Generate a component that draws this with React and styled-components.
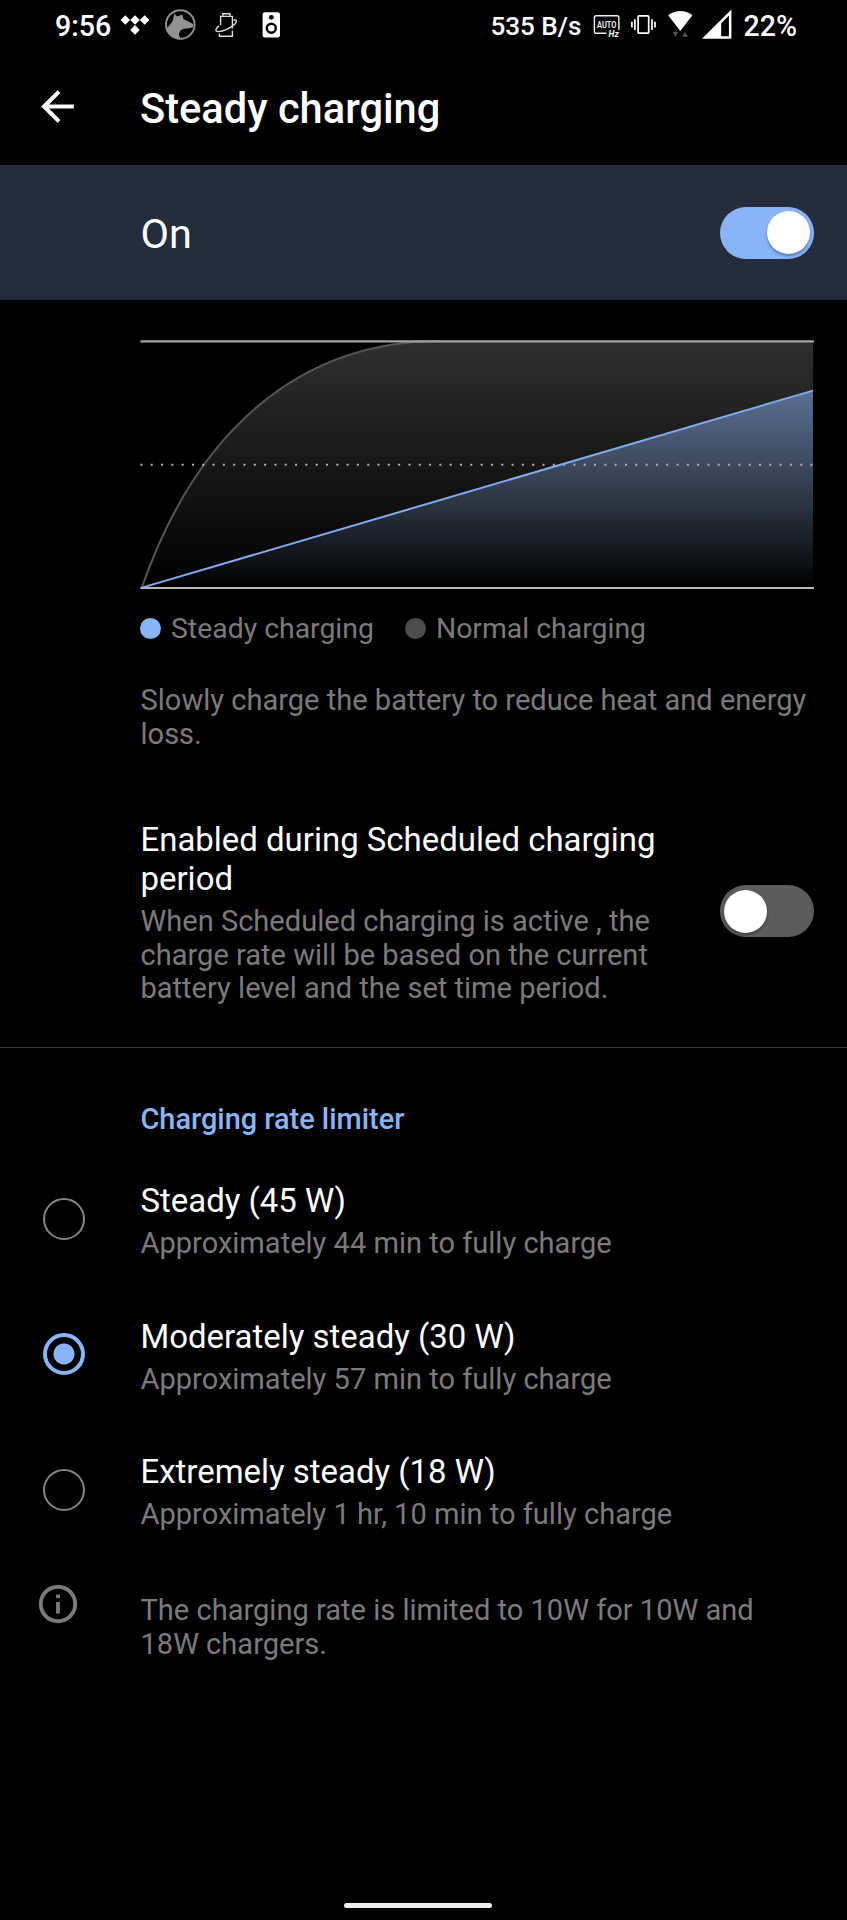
import { useState } from "react";
import styled, { createGlobalStyle } from "styled-components";

const GlobalStyle = createGlobalStyle`
  * {
    box-sizing: border-box;
  }
  body {
    margin: 0;
    background: #000;
    font-family: Roboto, "Liberation Sans", sans-serif;
  }
`;

const Screen = styled.div`
  width: 847px;
  height: 1920px;
  background: #000;
  color: #fff;
  overflow: hidden;
  display: flex;
  flex-direction: column;
`;

/* status bar */
const StatusBar = styled.div`
  height: 48px;
  padding: 1px 50px 0 55px;
  display: flex;
  justify-content: space-between;
`;
const StatusGroup = styled.div`
  display: flex;
  align-items: center;
  height: 48px;
`;
const StatusText = styled.span`
  margin-left: ${(p) => p.$gap || 0}px;
  padding-top: 2px;
  font-size: ${(p) => p.$size || 28.6}px;
  font-weight: 500;
  line-height: 34px;
  white-space: nowrap;
`;
const StatusIcon = styled.svg`
  display: block;
  flex: none;
  width: ${(p) => p.$w}px;
  height: 48px;
  margin-left: ${(p) => p.$gap || 0}px;
  margin-top: -2px;
`;

/* app bar */
const AppBar = styled.header`
  height: 117px;
  padding: 4px 34px 0 33px;
  display: flex;
  align-items: center;
`;
const BackButton = styled.button`
  width: 49px;
  height: 49px;
  margin: -5px 58px 0 0;
  padding: 0;
  border: 0;
  background: none;
  color: #fff;
`;
const Title = styled.h1`
  margin: 0;
  font-size: 41.6px;
  line-height: 48px;
  font-weight: 500;
`;

const MainSwitch = styled.div`
  height: 135px;
  padding: 0 33px 0 140.5px;
  background: #232d3d;
  display: flex;
  align-items: center;
  justify-content: space-between;
`;
const MainLabel = styled.span`
  font-size: 41.4px;
  line-height: 48px;
  padding-top: 3px;
`;

const Track = styled.button`
  flex: none;
  width: 94px;
  height: 52px;
  padding: 0 4px;
  border: 0;
  border-radius: 26px;
  background: ${(p) => (p.$on ? "#8ab4f8" : "#5c5c5c")};
  display: flex;
  align-items: center;
  justify-content: ${(p) => (p.$on ? "flex-end" : "flex-start")};
`;
const Thumb = styled.span`
  width: 43px;
  height: 43px;
  border-radius: 50%;
  background: #fff;
  box-shadow: 0 2px 3px rgba(0, 0, 0, 0.35);
`;

/* chart */
const ChartSection = styled.section`
  padding: 39px 33px 0 140px;
`;
const Chart = styled.svg`
  display: block;
  width: 674px;
  height: 251px;
`;
const Legend = styled.div`
  display: flex;
  margin-top: 22px;
`;
const LegendItem = styled.div`
  display: flex;
  align-items: center;
  margin-right: 31px;
`;
const Dot = styled.span`
  width: 21px;
  height: 21px;
  margin-right: 10px;
  border-radius: 50%;
  background: ${(p) => p.$color};
`;
const Summary = styled.p`
  margin: 0;
  color: #7b7b7b;
  font-size: 29.05px;
  line-height: 33.75px;
`;
const LegendLabel = styled(Summary)`
  font-size: 28.4px;
`;
const Description = styled(Summary)`
  margin-top: 38px;
  padding-left: 0.5px;
  white-space: nowrap;
`;

/* preference rows */
const PrefTitle = styled.div`
  margin-bottom: 6.5px;
  font-size: 32.95px;
  line-height: 38.6px;
`;
const SwitchPref = styled.div`
  height: 297px;
  padding: 70px 33px 0 140.5px;
  display: flex;
  justify-content: space-between;
  border-bottom: 1px solid #404040;

  ${Track} {
    margin-top: 64px;
  }
`;
const PrefBody = styled.div`
  width: 540px;
`;
const Category = styled.h2`
  margin: 0;
  padding: 55px 0 0 140.5px;
  height: 105px;
  color: #8ab4f8;
  font-size: 28.9px;
  line-height: 33.75px;
  font-weight: 500;
`;
const Option = styled.label`
  height: 135.6px;
  display: flex;
  align-items: center;
  padding: 1px 0 0 43px;
`;
const Radio = styled.span`
  flex: none;
  width: 42px;
  height: 42px;
  margin: -6px 55.5px 0 0;
  border-radius: 50%;
  border: ${(p) => (p.$checked ? "4px solid #8ab4f8" : "2px solid #858585")};
  background: ${(p) =>
    p.$checked
      ? "radial-gradient(circle, #8ab4f8 10px, transparent 11px)"
      : "none"};
`;
const Footer = styled.div`
  display: flex;
  align-items: flex-start;
  padding: 20px 33px 0 35px;
`;
const InfoIcon = styled.svg`
  flex: none;
  width: 46px;
  height: 46px;
  margin: 1px 59.5px 0 0;
`;
const FooterText = styled(Summary)`
  width: 640px;
  padding-top: 14px;
`;
const NavArea = styled.div`
  flex: 1;
  display: flex;
  align-items: flex-end;
  justify-content: center;
  padding: 0 11px 12px 0;
`;
const NavPill = styled.div`
  width: 148px;
  height: 5px;
  border-radius: 3px;
  background: #efefef;
`;

const options = [
  { id: "steady", title: "Steady (45 W)", time: "44 min" },
  { id: "moderate", title: "Moderately steady (30 W)", time: "57 min" },
  { id: "extreme", title: "Extremely steady (18 W)", time: "1 hr, 10 min" },
];

const Switch = ({ on, onClick }) => (
  <Track $on={on} onClick={onClick} role="switch" aria-checked={on}>
    <Thumb />
  </Track>
);

const LeftStatus = () => (
  <StatusGroup>
    <StatusText>9:56</StatusText>
    <StatusIcon $w={30} $gap={9} viewBox="120 0 30 48" fill="#fff">
      <path d="M125.3 15.2l4.8 4.8-4.8 4.8-4.8-4.8zM135 15.2l4.8 4.8-4.8 4.8-4.8-4.8zM144.7 15.2l4.8 4.8-4.8 4.8-4.8-4.8zM135 25.1l4.8 4.8-4.8 4.8-4.8-4.8z" />
    </StatusIcon>
    <StatusIcon $w={32} $gap={14} viewBox="164 0 32 48">
      <circle cx="180.3" cy="24.5" r="14.3" fill="none" stroke="#929292" strokeWidth="1.9" />
      <path
        fill="#929292"
        d="M174.2 13.8L177.3 16.6L182.2 14.6L183.6 19.3C187 20.6 190 22.2 193.4 24.3L193 27.3L187.5 28.6C183 28.4 180.2 30 179.2 33C178.6 35.3 179.5 37.5 181.2 39.2C173 39.5 166 33 166 28.5C168.5 27 171.5 23.5 173 20Z"
      />
    </StatusIcon>
    <StatusIcon $w={26} $gap={18} viewBox="214 0 26 48" fill="none" stroke="#dcdcdc" strokeWidth="1.4">
      <path d="M222.8 15.8V13.8H230V15.8" />
      <path d="M220.6 25.2V16.4H232.4V28.4M232.4 30.6V36.2H219.4V33.6" />
      <path d="M233.4 20.2C236.8 19.4 237.4 21.4 234.6 24.2C230.4 28.2 223 31.6 218.4 31.6C214.6 31.4 215.4 28.2 219 25.8" />
    </StatusIcon>
    <StatusIcon $w={18} $gap={22} viewBox="262 0 18 48">
      <rect x="262.6" y="12.2" width="17.4" height="25.4" rx="2.4" fill="#fff" />
      <circle cx="271.3" cy="17.3" r="2.4" fill="#000" />
      <circle cx="271.3" cy="28.3" r="4.5" fill="#fff" stroke="#000" strokeWidth="2.4" />
    </StatusIcon>
  </StatusGroup>
);

const RightStatus = () => (
  <StatusGroup>
    <StatusText $size={26.1}>535 B/s</StatusText>
    <StatusIcon $w={28} $gap={12} viewBox="593 0 28 48">
      <path
        d="M606.5 33.3H596.3Q594.4 33.3 594.4 31.4V17.6Q594.4 15.7 596.3 15.7H617Q618.9 15.7 618.9 17.6V30"
        fill="none"
        stroke="#f0f0f0"
        strokeWidth="1.4"
      />
      <text x="597" y="27.8" fontSize="9" fontWeight="600" textLength="19.4" lengthAdjust="spacingAndGlyphs" fill="#fff">
        AUTO
      </text>
      <text x="608.6" y="36.8" fontSize="8.6" fontWeight="700" fontStyle="italic" fill="#fff">
        Hz
      </text>
    </StatusIcon>
    <StatusIcon $w={26} $gap={10} viewBox="631 0 26 48" fill="none" stroke="#fff" strokeWidth="1.7">
      <rect x="638.1" y="15.8" width="10.6" height="17.4" rx="1" />
      <path d="M634.9 19.2V30M631.9 21.8V27.4M652 19.2V30M655 21.8V27.4" />
    </StatusIcon>
    <StatusIcon $w={25} $gap={11} viewBox="668 0 25 48">
      <path d="M668.2 15.2Q680.3 7 692.4 15.2L680.3 31Z" fill="#fff" />
      <path d="M672.6 32H678.2L675.4 36.8ZM682.2 36.8H688L685.1 32Z" fill="#555" />
    </StatusIcon>
    <StatusIcon $w={30} $gap={9} viewBox="702 0 30 48">
      <path d="M702 38.8L731.4 9.6V38.8Z M721.2 23.2V36.3H728.9V15.5Z" fill="#fff" fillRule="evenodd" />
    </StatusIcon>
    <StatusText $gap={11}>22%</StatusText>
  </StatusGroup>
);

const ChargeChart = () => (
  <Chart viewBox="140 339 674 251">
    <defs>
      <linearGradient id="normal" x1="0" y1="0" x2="0" y2="1">
        <stop offset="0" stopColor="#2f2f2f" />
        <stop offset="1" stopColor="#000" />
      </linearGradient>
      <linearGradient id="steady" x1="0" y1="0" x2="0" y2="1">
        <stop offset="0" stopColor="#8ab4f8" stopOpacity="0.51" />
        <stop offset="1" stopColor="#8ab4f8" stopOpacity="0" />
      </linearGradient>
    </defs>
    <path d="M142 587C197 430 300 341 440 341H813V588H142Z" fill="url(#normal)" />
    <path d="M142 588L813 391V588Z" fill="url(#steady)" />
    <path d="M142 587C197 430 300 341 440 341" fill="none" stroke="#565656" strokeWidth="2" />
    <path d="M140.4 341.4H814" stroke="#a3a3a3" strokeWidth="2.2" />
    <path d="M140.4 588H814" stroke="#b9b9b9" strokeWidth="2.2" />
    <path d="M140.4 464.7H814" stroke="#b4b4b4" strokeWidth="2" strokeDasharray="2 8.31" />
    <path d="M142 587.6L813 390.6" stroke="#83aaec" strokeWidth="2" />
  </Chart>
);

const App = () => {
  const [enabled, setEnabled] = useState(true);
  const [scheduled, setScheduled] = useState(false);
  const [rate, setRate] = useState("moderate");

  return (
    <Screen>
      <GlobalStyle />
      <StatusBar>
        <LeftStatus />
        <RightStatus />
      </StatusBar>
      <AppBar>
        <BackButton aria-label="Back">
          <svg width="49" height="49" viewBox="0 0 24 24" fill="currentColor">
            <path d="M20 11H7.83l5.59-5.59L12 4l-8 8 8 8 1.41-1.41L7.83 13H20v-2z" />
          </svg>
        </BackButton>
        <Title>Steady charging</Title>
      </AppBar>
      <MainSwitch>
        <MainLabel>{enabled ? "On" : "Off"}</MainLabel>
        <Switch on={enabled} onClick={() => setEnabled(!enabled)} />
      </MainSwitch>
      <ChartSection>
        <ChargeChart />
        <Legend>
          <LegendItem>
            <Dot $color="#8ab4f8" />
            <LegendLabel>Steady charging</LegendLabel>
          </LegendItem>
          <LegendItem>
            <Dot $color="#4d4d4d" />
            <LegendLabel>Normal charging</LegendLabel>
          </LegendItem>
        </Legend>
        <Description>
          Slowly charge the battery to reduce heat and energy
          <br />
          loss.
        </Description>
      </ChartSection>
      <SwitchPref>
        <PrefBody>
          <PrefTitle>Enabled during Scheduled charging period</PrefTitle>
          <Summary>
            When Scheduled charging is active , the charge rate will be based on
            the current battery level and the set time period.
          </Summary>
        </PrefBody>
        <Switch on={scheduled} onClick={() => setScheduled(!scheduled)} />
      </SwitchPref>
      <Category>Charging rate limiter</Category>
      {options.map((o) => (
        <Option key={o.id} onClick={() => setRate(o.id)}>
          <Radio $checked={rate === o.id} />
          <div>
            <PrefTitle>{o.title}</PrefTitle>
            <Summary>Approximately {o.time} to fully charge</Summary>
          </div>
        </Option>
      ))}
      <Footer>
        <InfoIcon viewBox="0 0 24 24" fill="#7b7b7b">
          <path d="M11 7h2v2h-2zm0 4h2v6h-2zm1-9C6.48 2 2 6.48 2 12s4.48 10 10 10 10-4.48 10-10S17.52 2 12 2zm0 18c-4.41 0-8-3.59-8-8s3.59-8 8-8 8 3.59 8 8-3.59 8-8 8z" />
        </InfoIcon>
        <FooterText>
          The charging rate is limited to 10W for 10W and 18W chargers.
        </FooterText>
      </Footer>
      <NavArea>
        <NavPill />
      </NavArea>
    </Screen>
  );
};

export default App;
